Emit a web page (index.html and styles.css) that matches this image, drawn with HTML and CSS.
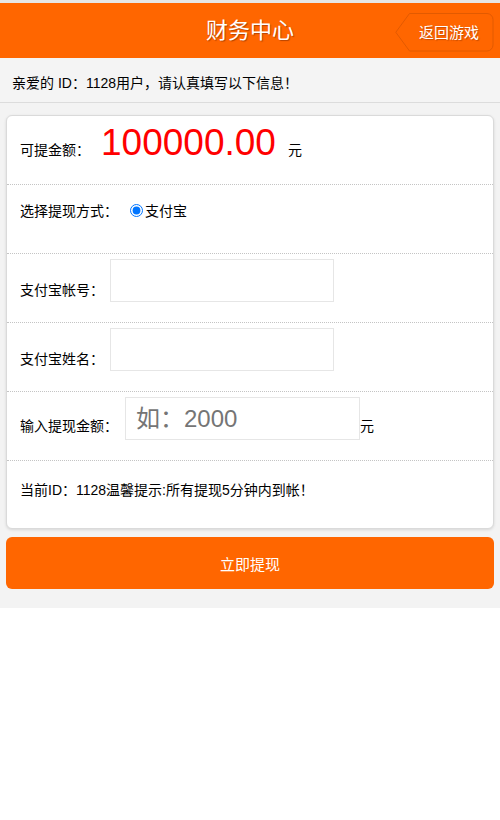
FILE: index.html
```html
<!DOCTYPE html>
<html lang="zh-CN">
<head>
    <meta charset="UTF-8">
    <meta name="viewport" content="width=device-width, initial-scale=1.0">
    <title>财务中心</title>
    <link rel="stylesheet" href="styles.css">
</head>
<body>
    <div class="page">
        <div class="header">
            <h1>财务中心</h1>
            <a class="back" href="#">
                <svg class="back-shape" width="99" height="39" viewBox="0 0 99 39">
                    <path d="M14.5 0.5 H92 a6 6 0 0 1 6 6 V32 a6 6 0 0 1 -6 6 H14.5 L0.8 19.25 Z" fill="#ff6600" stroke="#e25a00" stroke-width="1"/>
                </svg>
                <span>返回游戏</span>
            </a>
        </div>
        <div class="notice">亲爱的 ID：1128用户，请认真填写以下信息！</div>

        <form class="card">
            <div class="row row-amount">
                <span class="label">可提金额：</span>
                <span class="amount">100000.00</span>
                <span class="unit">元</span>
            </div>
            <div class="row row-method">
                <span class="label">选择提现方式：</span>
                <input type="radio" name="way" id="alipay" checked>
                <label for="alipay">支付宝</label>
            </div>
            <div class="row row-field">
                <span class="label">支付宝帐号：</span>
                <input class="field" type="text">
            </div>
            <div class="row row-field">
                <span class="label">支付宝姓名：</span>
                <input class="field" type="text">
            </div>
            <div class="row row-field row-money">
                <span class="label">输入提现金额：</span>
                <input class="field field-money" type="text" placeholder="如：2000">
                <span class="label">元</span>
            </div>
            <div class="row row-tip">当前ID：1128温馨提示:所有提现5分钟内到帐！</div>
        </form>

        <button class="submit" type="button">立即提现</button>
    </div>
</body>
</html>
```

FILE: styles.css
```css
body {
    margin: 0;
    background: #fff;
    font-family: "Liberation Sans", Arial, "Noto Sans CJK SC", sans-serif;
    font-size: 14px;
    color: #000;
}

.page {
    background: #f3f3f3;
    padding-bottom: 19px;
}

.header {
    position: relative;
    height: 55px;
    border-top: 3px solid #e6e6e6;
    background: #ff6600;
    display: flex;
    align-items: center;
    justify-content: center;
}

.header h1 {
    margin: 0;
    font-size: 22px;
    font-weight: normal;
    line-height: 26px;
    color: #fff;
    text-shadow: 1px 1px 1px rgba(120, 40, 0, 0.55);
}

.back {
    position: absolute;
    top: 10px;
    right: 6px;
    width: 99px;
    height: 39px;
    display: flex;
    align-items: center;
    justify-content: flex-end;
    padding-right: 15px;
    box-sizing: border-box;
    color: #fff;
    font-size: 15px;
    text-decoration: none;
    text-shadow: 1px 1px 1px rgba(120, 40, 0, 0.4);
}

.back-shape {
    position: absolute;
    left: 0;
    top: 0;
}

.back span {
    position: relative;
    line-height: 18px;
}

.notice {
    height: 45px;
    box-sizing: border-box;
    padding: 16px 12px 0;
    line-height: 18px;
    border-bottom: 1px solid #dcdcdc;
    background: #f4f4f4;
}

.card {
    margin: 12px 6px 0;
    background: #fff;
    border: 1px solid #dadada;
    border-radius: 6px;
    box-shadow: 0 1px 3px rgba(0, 0, 0, 0.12);
}

.row {
    height: 69px;
    box-sizing: border-box;
    padding: 0 13px;
    border-bottom: 1px dotted #c4c4c4;
    display: flex;
    align-items: flex-start;
}

.row:last-child {
    border-bottom: none;
    height: 67px;
}

.label {
    line-height: 20px;
}

.row-amount {
    align-items: baseline;
    padding-top: 6px;
}

.amount {
    margin-left: 11px;
    font-size: 37px;
    line-height: 42px;
    color: #ff0000;
}

.unit {
    margin-left: 12px;
}

.row-method {
    padding-top: 16px;
    line-height: 20px;
}

.row-method input {
    margin: 3px 2px 0 12px;
    width: 13px;
    height: 13px;
}

.row-field {
    padding-top: 5px;
}

.row-field .label {
    margin-top: 21px;
}

.row-money .label {
    margin-top: 19px;
}

.field {
    width: 224px;
    height: 43px;
    box-sizing: border-box;
    margin: 0 0 0 6px;
    padding: 0 10px;
    border: 1px solid #e6e6e6;
    border-radius: 0;
    font-family: inherit;
    font-size: 24px;
    outline: none;
}

.field-money {
    width: 235px;
    margin-left: 7px;
}

.field::placeholder {
    color: #757575;
}

.row-tip {
    padding-top: 19px;
    line-height: 20px;
}

.submit {
    display: block;
    width: calc(100% - 12px);
    height: 52px;
    margin: 8px 6px 0;
    border: none;
    border-radius: 6px;
    background: #ff6600;
    color: #fff;
    font-family: inherit;
    font-size: 15px;
    cursor: pointer;
}
```
